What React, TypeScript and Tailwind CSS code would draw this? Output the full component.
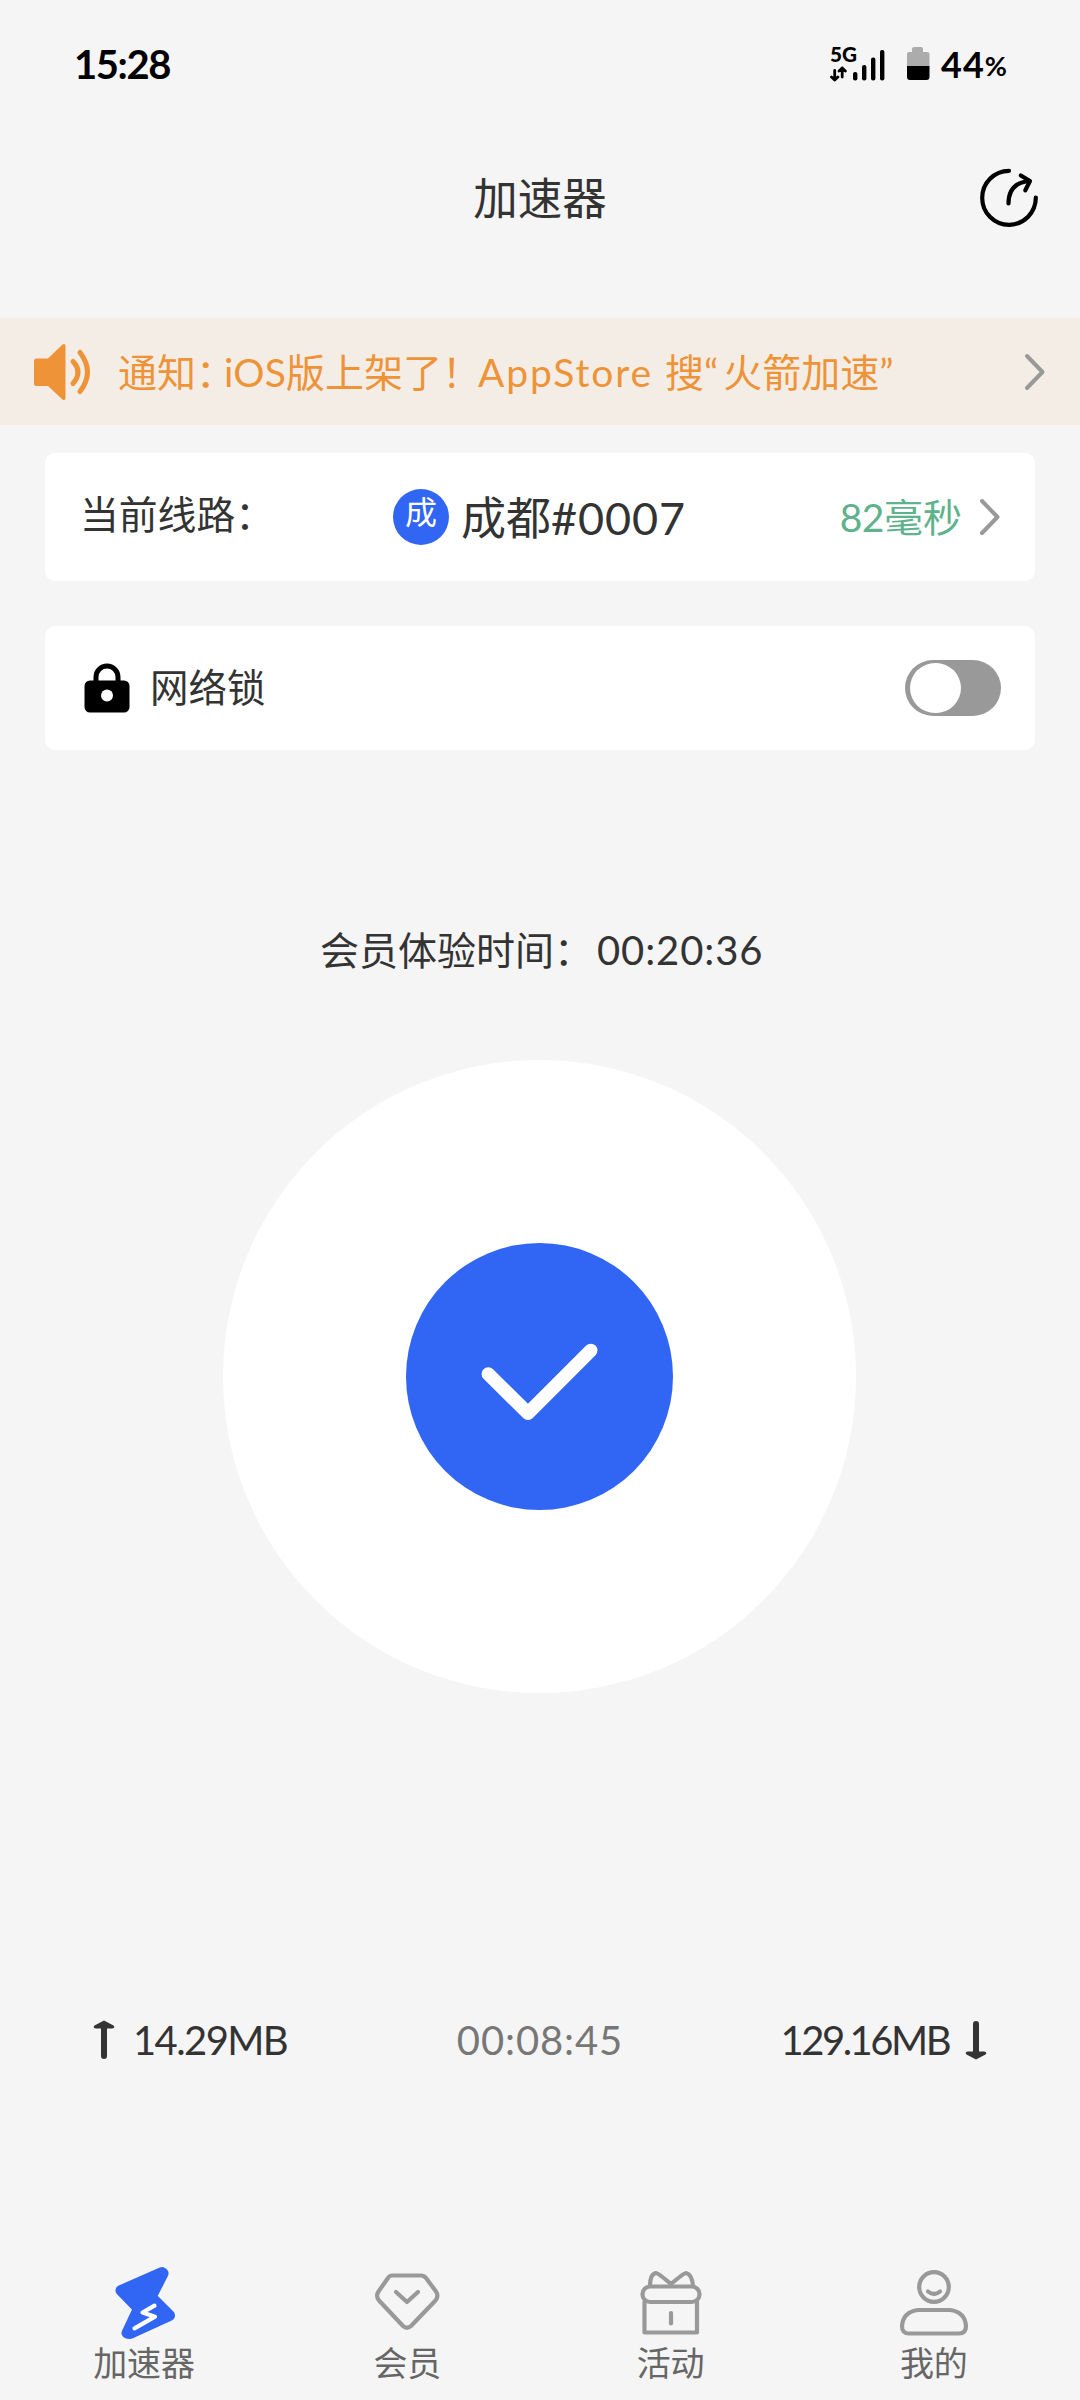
import type { ReactNode } from 'react';

const FONT = "font-['Lato','Noto_Sans_CJK_SC',sans-serif]";

function Chevron() {
    return (
        <svg width="22" height="38" viewBox="0 0 22 38" fill="none" stroke="#999" strokeWidth="4" strokeLinecap="round" strokeLinejoin="round">
            <path d="M3 3 L18.5 19 L3 35" />
        </svg>
    );
}

function StatusBar() {
    return (
        <div className="flex h-32 items-start justify-between pl-[74px] pr-[73px] text-black">
            <span className="mt-[40px] text-[40px] font-bold leading-[48px] tracking-[-1.4px]">15:28</span>
            <div className="flex items-start">
                <svg className="mt-[34px]" width="56" height="48" viewBox="0 -12 56 48">
                    <text x="0" y="15.5" fontSize="20" fontWeight="900" textLength="27" lengthAdjust="spacingAndGlyphs">5G</text>
                    <g fill="none" stroke="#000" strokeWidth="2.8" strokeLinecap="round" strokeLinejoin="round">
                        <path d="M4.7 24.5 V34 M1.5 31 L4.7 34 L7.9 31" />
                        <path d="M12.2 31 V22 M9 25 L12.2 22 L15.4 25" />
                    </g>
                    <rect x="23" y="26" width="4.4" height="8.5" rx="2" />
                    <rect x="32" y="19" width="4.4" height="15.5" rx="2" />
                    <rect x="41" y="11.5" width="4.4" height="23" rx="2" />
                    <rect x="50" y="4" width="4.4" height="30.5" rx="2" />
                </svg>
                <svg className="ml-5 mt-[46px]" width="24" height="36" viewBox="0 0 24 36">
                    <path d="M1 20 V8 Q1 6 3 6 H6 V3 Q6 1 8 1 H15 Q17 1 17 3 V6 H21 Q23.5 6 23.5 8 V20 Z" fill="#acacac" />
                    <path d="M1 20 H23.5 V31 Q23.5 34 20.5 34 H4 Q1 34 1 31 Z" />
                </svg>
                <span className="ml-[11px] mt-[43px] text-[36px] font-bold leading-[42px] tracking-[1px]">44</span>
                <span className="mt-[47px] inline-block text-[27px] font-bold leading-[38px]">%</span>
            </div>
        </div>
    );
}

function TitleBar() {
    return (
        <header className="grid h-[140px] grid-cols-[1fr_auto_1fr] items-center">
            <h1 className="col-start-2 text-[44.5px] leading-[60px] text-[#333]">加速器</h1>
            <svg className="-mt-px mr-[41px] justify-self-end" width="60" height="60" viewBox="0 0 60 60" fill="none" stroke="#000" strokeWidth="4.2" strokeLinecap="round" strokeLinejoin="round">
                <path d="M30 2.8 A26.8 27 0 1 0 56.8 29.5" />
                <path d="M29.5 35.5 C29.5 22 36 14.5 50 13" />
                <path d="M41.8 7.5 L51 13 L46.3 22.3" />
            </svg>
        </header>
    );
}

function NoticeBar() {
    return (
        <div className="mt-[50px] flex h-[107px] items-center bg-[#f4ede5] pl-[34px] pr-[34px] text-[#ee9338]">
            <svg width="58" height="58" viewBox="0 0 58 58" fill="none" stroke="#ee9338" strokeLinecap="round">
                <path d="M2.5 15.5 H14 L28.5 1.5 Q31.5 0 31.5 3 V55 Q31.5 58 28.5 56.5 L14 43 H2.5 Q0 43 0 40.5 V18 Q0 15.5 2.5 15.5 Z" fill="#ee9338" stroke="none" />
                <path d="M39 18.5 Q49 29 39 40.5" strokeWidth="5" />
                <path d="M46 9.5 Q61 29 46 48.5" strokeWidth="5" />
            </svg>
            <p className="ml-[26px] whitespace-nowrap text-[39px] leading-[56px]">
                通知<span className="tracking-[-11px]">：</span><span className="tracking-[0.2px]">iOS</span>版上架了<span className="tracking-[-13px]">！</span>{' '}
                <span className="tracking-[1.9px]">AppStore </span>搜<span className="tracking-[5px]">“</span>火箭加速”
            </p>
            <div className="ml-auto">
                <Chevron />
            </div>
        </div>
    );
}

function RouteCard() {
    return (
        <section className="mx-[45px] mt-7 flex h-32 items-center rounded-[10px] bg-white text-[#333]">
            <span className="-mt-[7px] ml-[35px] w-[313px] text-[38.8px] leading-[56px]">当前线路：</span>
            <span className="flex size-14 items-start justify-center rounded-full bg-[#3165f3] text-[32px] leading-[46px] text-white">成</span>
            <span className="ml-3 mt-[2px] text-[45px] leading-[60px]">成都<span className="tracking-[0.9px]">#0007</span></span>
            <span className="ml-auto text-[39px] leading-[56px] text-[#5eb28c]"><span className="tracking-[-0.5px]">82</span>毫秒</span>
            <span className="ml-[17px] mr-[34px]">
                <Chevron />
            </span>
        </section>
    );
}

function LockCard() {
    return (
        <section className="mx-[45px] mt-[45px] flex h-[124px] items-center rounded-[10px] bg-white text-[#333]">
            <svg className="ml-[39px]" width="46" height="50" viewBox="0 0 46 50">
                <path d="M12 20 V14 A11 11 0 0 1 34 14 V20" fill="none" stroke="#000" strokeWidth="5" />
                <rect x="0.5" y="17.5" width="45" height="32" rx="5.5" />
                <circle cx="23" cy="32.5" r="6" fill="#fff" />
            </svg>
            <span className="-mt-[2px] ml-5 text-[38.5px] leading-[56px]">网络锁</span>
            <div className="ml-auto mr-[34px] flex h-14 w-24 items-center rounded-full bg-[#999] pl-[5px]">
                <div className="h-[50px] w-[51px] rounded-full bg-white" />
            </div>
        </section>
    );
}

function Arrow({ down }: { down?: boolean }) {
    return (
        <svg className={down ? 'rotate-180' : ''} width="22" height="40" viewBox="0 0 22 40" fill="#333">
            <path d="M11 0.5 L20.5 5.5 Q22.5 8 19 8.5 H3 Q-0.5 8 1.5 5.5 Z" />
            <rect x="8" y="4" width="6" height="35" rx="3" />
        </svg>
    );
}

function Traffic() {
    return (
        <div className="mt-[319px] grid h-14 grid-cols-[1fr_auto_1fr] items-center px-[93px] text-[40px] leading-[56px] text-[#333]">
            <div className="flex items-center">
                <Arrow />
                <span className="ml-[18px] tracking-[-1.6px]">14.29MB</span>
            </div>
            <span className="tracking-[0.9px] text-[#777]">00:08:45</span>
            <div className="flex items-center justify-end">
                <span className="mr-[16px] tracking-[-2.5px]">129.16MB</span>
                <Arrow down />
            </div>
        </div>
    );
}

function NavItem({ label, children }: { label: string; children: ReactNode }) {
    return (
        <div className="flex flex-col items-center">
            <svg width="72" height="78" viewBox="0 0 72 78" fill="none" stroke="#999" strokeWidth="4.2" strokeLinecap="round" strokeLinejoin="round">
                {children}
            </svg>
            <span className="text-[34px] leading-[44px] text-[#666]">{label}</span>
        </div>
    );
}

function TabBar() {
    return (
        <nav className="mt-auto grid h-[137px] grid-cols-4 pl-[12.5px] pr-[14.5px]">
            <NavItem label="加速器">
                <path d="M54 9.5 L13 27.5 L30.5 45.5 L19 70 L22 70.5 L61.5 52.5 L43 34 L55 10.5 Z" fill="#3165f3" stroke="#3165f3" strokeWidth="11" />
                <path d="M46.5 42.7 L34.5 49.5 L47 53.7 L26.5 65.3" stroke="#fff" />
            </NavItem>
            <NavItem label="会员">
                <path d="M21 12.5 H50 Q53 12.5 55 15 L65 28.5 Q68 33 64.5 37.5 L40 63 Q36 66.5 32 63 L8 37.5 Q4.5 33 7.5 28.5 L17 15 Q18.5 12.5 21 12.5 Z" />
                <path d="M25 29 L36 39 L47 29" />
            </NavItem>
            <NavItem label="活动">
                <rect x="7.5" y="23.5" width="57" height="15.5" rx="7.5" />
                <path d="M9.5 39 V69.5 H62 V39" />
                <path d="M15 23 Q15 11 21 10 Q23 10 36 21 Q49 10 51 10 Q57 11 58 23" />
                <path d="M36 50 V60.5" />
            </NavItem>
            <NavItem label="我的">
                <circle cx="36" cy="24" r="14.8" />
                <path d="M30 28.5 Q36 33.5 42 28.5" />
                <path d="M20 47 H52 Q67 49 68 63 Q68 70.5 61 70.5 H11 Q4 70.5 4 63 Q5 49 20 47 Z" />
            </NavItem>
        </nav>
    );
}

export default function App() {
    return (
        <main className={`flex h-[2400px] w-[1080px] flex-col overflow-hidden bg-[#f5f5f5] ${FONT}`}>
            <StatusBar />
            <TitleBar />
            <NoticeBar />
            <RouteCard />
            <LockCard />

            {/* Trial time left */}
            <p className="mt-[172px] flex h-14 items-center pl-[320px] text-[39px] leading-[56px] text-[#333]">
                会员体验时间：<span className="ml-1 text-[40px] tracking-[0.9px]">00:20:36</span>
            </p>

            {/* Connect button */}
            <div className="ml-[223px] mt-[82px] flex size-[633px] shrink-0 items-center justify-center rounded-full bg-white">
                <button className="size-[267px] rounded-full bg-[#3165f3]">
                    <svg width="267" height="267" viewBox="0 0 267 267" fill="none" stroke="#fff" strokeWidth="13.5" strokeLinecap="round" strokeLinejoin="round">
                        <path d="M82.3 131 L122 170.3 L184.7 107.4" />
                    </svg>
                </button>
            </div>

            <Traffic />
            <TabBar />
        </main>
    );
}
